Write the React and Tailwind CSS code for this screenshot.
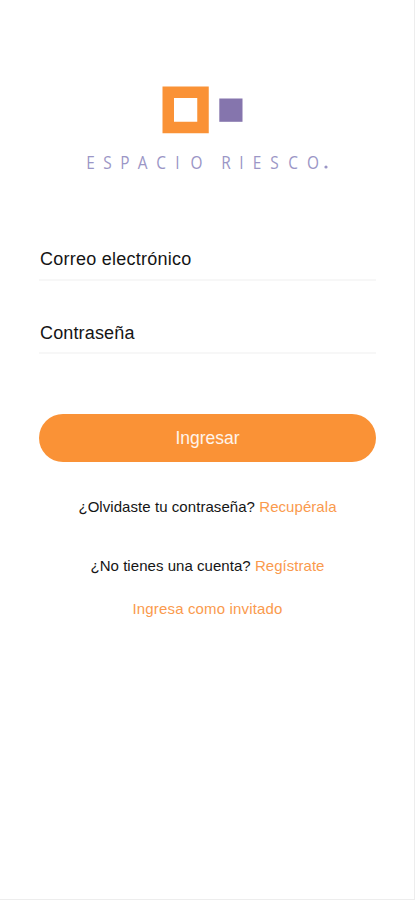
const wordmark = [
  ["E", 90.5], ["S", 107.5], ["P", 125], ["A", 142.5], ["C", 161], ["I", 177.5], ["O", 196.5],
  ["R", 226], ["I", 241.5], ["E", 257], ["S", 274.5], ["C", 293], ["O", 313],
];

function Logo() {
  return (
    <svg className="block h-[100px] w-[415px]" viewBox="0 80 415 100" aria-label="Espacio Riesco">
      <rect x="168.250" y="92.250" width="34.750" height="35.250" fill="#fff" stroke="#fa9236" strokeWidth="11.500" />
      <rect x="219.300" y="98.500" width="23.200" height="23.300" fill="#8575ad" />
      <g fill="#9b96c6" fontFamily="'Open Sans', sans-serif" fontSize="17.500" textAnchor="middle">
        {wordmark.map(([letter, x]) => (
          <text key={x} transform={`translate(${x} 168.800) scale(0.88 1)`}>{letter}</text>
        ))}
        <circle cx="326" cy="167" r="1.600" />
      </g>
    </svg>
  );
}

function Field({ label, className }) {
  return (
    <div className="h-10 border-b-2 border-[#f7f7f7] pl-px">
      <label className={`block text-[18px] ${className}`}>{label}</label>
    </div>
  );
}

export default function App() {
  return (
    <main className="h-[900px] w-[415px] overflow-hidden border-r border-b border-[#ededed] bg-white pt-20 font-['Liberation_Sans',sans-serif] text-[#151515]">
      <Logo />
      <form className="ml-[39px] mt-[61px] w-[337px]">
        <Field label="Correo electrónico" className="leading-[36px] tracking-[0.25px]" />
        <div className="h-[33px]" />
        <Field label="Contraseña" className="leading-[38px] tracking-[0.15px]" />
        <button type="button" className="mt-[60px] block h-[48px] w-full rounded-full bg-[#fa9236] pt-px text-[17.5px] text-white/90">Ingresar</button>
      </form>
      <div className="w-[415px] text-center text-[15px] leading-6">
        <p className="mt-[33px] tracking-[0.06px]">¿Olvidaste tu contraseña? <a className="text-[#fa9a4d]">Recupérala</a></p>
        <p className="mt-[35px] tracking-[0.04px]">¿No tienes una cuenta? <a className="text-[#fa9a4d]">Regístrate</a></p>
        <p className="mt-[19px] tracking-[0.15px] text-[#fa9a4d]">Ingresa como invitado</p>
      </div>
    </main>
  );
}
